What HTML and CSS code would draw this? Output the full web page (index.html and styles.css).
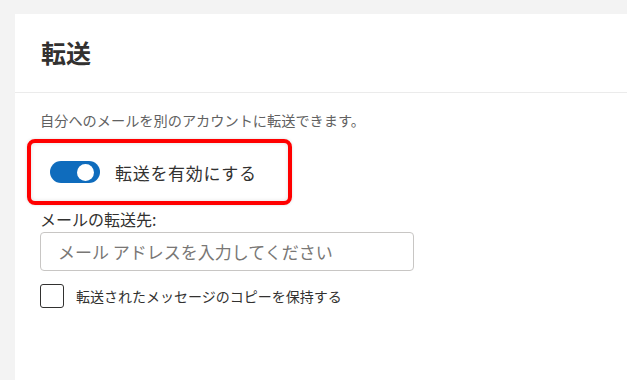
FILE: index.html
```html
<!DOCTYPE html>
<html lang="ja">
<head>
<meta charset="utf-8">
<link rel="stylesheet" href="styles.css">
</head>
<body>
<div class="panel">
  <div class="panel-header">
    <h1 class="title">転送</h1>
  </div>
  <div class="panel-body">
    <p class="desc">自分へのメールを別のアカウントに転送できます。</p>
    <div class="highlight">
      <div class="toggle-row">
        <span class="toggle"><span class="knob"></span></span>
        <span class="toggle-label">転送を有効にする</span>
      </div>
    </div>
    <label class="field-label">メールの転送先:</label>
    <div class="input"><span class="placeholder">メール アドレスを入力してください</span></div>
    <div class="check-row">
      <span class="checkbox"></span>
      <span class="check-label">転送されたメッセージのコピーを保持する</span>
    </div>
  </div>
</div>
</body>
</html>
```
FILE: styles.css
```css
html, body {
  margin: 0;
  height: 100%;
}
body {
  background: #f3f3f3;
  padding: 14px 0 0 15px;
  box-sizing: border-box;
  font-family: "Noto Sans CJK JP", "Noto Sans", sans-serif;
  color: #323130;
  overflow: hidden;
}
.panel {
  background: #ffffff;
  height: 100%;
}
.panel-header {
  height: 78px;
  border-bottom: 1px solid #ebebeb;
  display: flex;
  align-items: center;
  padding-left: 26px;
}
.title {
  margin: 0;
  font-size: 25px;
  font-weight: 600;
  color: #323130;
  line-height: 30px;
  position: relative;
  top: -1px;
}
.panel-body {
  padding: 17px 0 0 25px;
}
.desc {
  margin: 0;
  font-size: 14.2px;
  line-height: 20px;
  color: #616161;
}
.highlight {
  margin: 9px 0 0 -13px;
  width: 265px;
  height: 66px;
  box-sizing: border-box;
  border: 4px solid #ff0000;
  border-radius: 8px;
  box-shadow: inset 0 0 4px rgba(0,0,0,0.12), 0 0 3px rgba(0,0,0,0.15);
  display: flex;
  align-items: center;
  padding-left: 19px;
}
.toggle-row {
  display: flex;
  align-items: center;
}
.toggle {
  width: 50px;
  height: 22px;
  border-radius: 11px;
  background: #0f6cbd;
  display: flex;
  align-items: center;
  justify-content: flex-end;
  padding-right: 6px;
  box-sizing: border-box;
}
.knob {
  width: 17px;
  height: 17px;
  border-radius: 50%;
  background: #ffffff;
}
.toggle-label {
  margin-left: 15px;
  font-size: 17px;
  color: #323130;
  letter-spacing: 0.7px;
}
.field-label {
  display: block;
  margin-top: 3px;
  font-size: 16px;
  line-height: 22px;
  color: #323130;
}
.input {
  margin-top: 2px;
  width: 374px;
  height: 39px;
  box-sizing: border-box;
  border: 1px solid #c8c6c4;
  border-radius: 4px;
  display: flex;
  align-items: center;
  padding-left: 17px;
}
.placeholder {
  font-size: 17px;
  color: #797775;
}
.check-row {
  margin-top: 13px;
  display: flex;
  align-items: center;
}
.checkbox {
  width: 24px;
  height: 24px;
  box-sizing: border-box;
  border: 1px solid #323130;
  border-radius: 3px;
}
.check-label {
  margin-left: 12px;
  font-size: 14px;
  color: #323130;
}
```
